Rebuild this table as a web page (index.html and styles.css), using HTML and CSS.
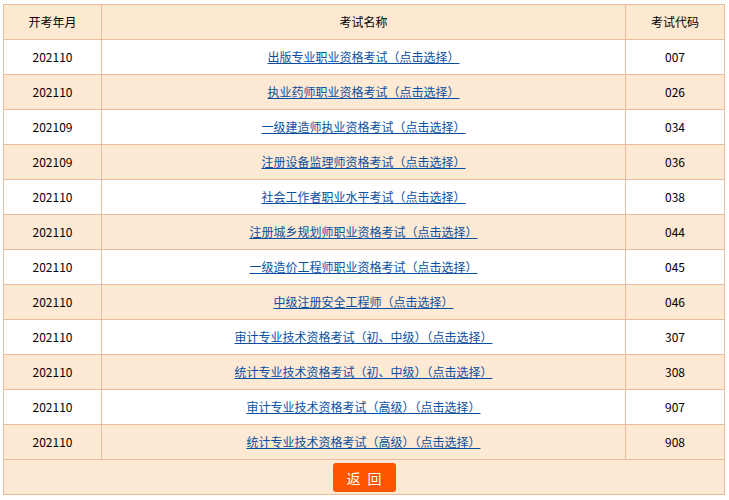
FILE: index.html
```html
<!DOCTYPE html>
<html lang="zh">
<head>
<meta charset="utf-8">
<link rel="stylesheet" href="styles.css">
</head>
<body>
<div class="wrap">
<table class="exam">
  <colgroup><col class="c1"><col class="c2"><col class="c3"></colgroup>
  <thead>
    <tr><th>开考年月</th><th>考试名称</th><th>考试代码</th></tr>
  </thead>
  <tbody>
    <tr><td>202110</td><td><a href="#">出版专业职业资格考试（点击选择）</a></td><td>007</td></tr>
    <tr class="alt"><td>202110</td><td><a href="#">执业药师职业资格考试（点击选择）</a></td><td>026</td></tr>
    <tr><td>202109</td><td><a href="#">一级建造师执业资格考试（点击选择）</a></td><td>034</td></tr>
    <tr class="alt"><td>202109</td><td><a href="#">注册设备监理师资格考试（点击选择）</a></td><td>036</td></tr>
    <tr><td>202110</td><td><a href="#">社会工作者职业水平考试（点击选择）</a></td><td>038</td></tr>
    <tr class="alt"><td>202110</td><td><a href="#">注册城乡规划师职业资格考试（点击选择）</a></td><td>044</td></tr>
    <tr><td>202110</td><td><a href="#">一级造价工程师职业资格考试（点击选择）</a></td><td>045</td></tr>
    <tr class="alt"><td>202110</td><td><a href="#">中级注册安全工程师（点击选择）</a></td><td>046</td></tr>
    <tr><td>202110</td><td><a href="#">审计专业技术资格考试（初、中级）（点击选择）</a></td><td>307</td></tr>
    <tr class="alt"><td>202110</td><td><a href="#">统计专业技术资格考试（初、中级）（点击选择）</a></td><td>308</td></tr>
    <tr><td>202110</td><td><a href="#">审计专业技术资格考试（高级）（点击选择）</a></td><td>907</td></tr>
    <tr class="alt"><td>202110</td><td><a href="#">统计专业技术资格考试（高级）（点击选择）</a></td><td>908</td></tr>
  </tbody>
  <tfoot>
    <tr class="alt"><td colspan="3" class="foot"><button class="back" type="button">返 回</button></td></tr>
  </tfoot>
</table>
</div>
</body>
</html>
```

FILE: styles.css
```css
html, body {
  margin: 0;
  padding: 0;
  background: #fff;
}
.wrap {
  padding: 4px 0 0 3px;
}
.exam {
  border-collapse: collapse;
  width: 722px;
  table-layout: fixed;
  font-family: "SimSun", "Noto Sans CJK SC", "DejaVu Sans", sans-serif;
  font-size: 12px;
  color: #000;
}
.c1 { width: 98px; }
.c2 { width: 524px; }
.c3 { width: 99px; }
.exam th,
.exam td {
  border: 1px solid #e8bc9c;
  height: 33px;
  padding: 0 0 1px;
  text-align: center;
  vertical-align: middle;
  font-weight: normal;
  line-height: 16px;
}
.exam thead th {
  background: #fde8d1;
}
.exam tr.alt td {
  background: #fde9d4;
}
.exam a {
  color: #0b4fa0;
  text-decoration: underline;
}
.exam td.foot {
  padding: 0;
  height: 34px;
}
.back {
  display: inline-block;
  width: 63px;
  height: 29px;
  border: 0;
  border-radius: 3px;
  background: #ff5500;
  color: #fff;
  font-family: "Noto Sans CJK SC", sans-serif;
  font-size: 14px;
  letter-spacing: 2px;
  padding: 0 0 0 2px;
  margin-top: 1px;
  vertical-align: middle;
  cursor: pointer;
}
```
